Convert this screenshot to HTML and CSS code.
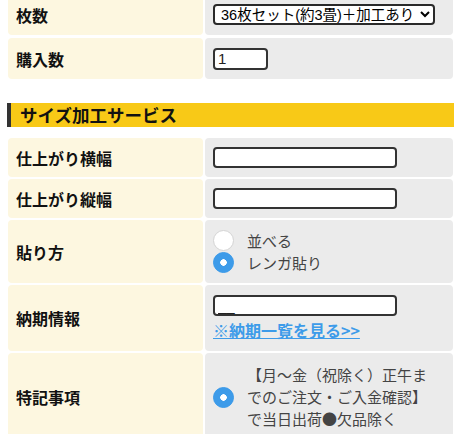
FILE: index.html
```html
<!DOCTYPE html>
<html lang="ja">
<head>
<meta charset="utf-8">
<link rel="stylesheet" href="styles.css">
</head>
<body>
<div class="form first">
  <div class="lbl r41">枚数</div>
  <div class="val r41">
    <select class="sel">
      <option>36枚セット(約3畳)＋加工あり</option>
    </select>
  </div>
  <div class="lbl r41">購入数</div>
  <div class="val r41"><input class="num" type="text" value="1"></div>
</div>

<h2 class="sec">サイズ加工サービス</h2>

<div class="form second">
  <div class="lbl r39">仕上がり横幅</div>
  <div class="val r39"><input class="txt" type="text"></div>
  <div class="lbl r39">仕上がり縦幅</div>
  <div class="val r39"><input class="txt" type="text"></div>
  <div class="lbl r63">貼り方</div>
  <div class="val r63">
    <div class="radios">
      <label class="opt"><input class="rad" type="radio" name="h"><span>並べる</span></label>
      <label class="opt"><input class="rad" type="radio" name="h" checked><span>レンガ貼り</span></label>
    </div>
  </div>
  <div class="lbl r66">納期情報</div>
  <div class="val r66 stack">
    <input class="txt" type="text" value="__">
    <a class="link" href="#">※納期一覧を見る&gt;&gt;</a>
  </div>
  <div class="lbl r88">特記事項</div>
  <div class="val r88">
    <label class="opt note"><input class="rad" type="radio" name="n" checked><span>【月～金（祝除く）正午までのご注文・ご入金確認】で当日出荷●欠品除く</span></label>
  </div>
</div>
</body>
</html>
```

FILE: styles.css
```css
html, body {
  margin: 0;
  padding: 0;
  background: #fff;
}
body {
  font-family: "Noto Sans CJK JP", "Liberation Sans", sans-serif;
  overflow: hidden;
}
.form {
  display: grid;
  grid-template-columns: 195px 248px;
  column-gap: 2px;
  row-gap: 3px;
  margin-left: 8px;
}
.form.first {
  margin-top: -6px;
}
.form.second {
  row-gap: 2px;
}
.lbl {
  background: #fdf7e0;
  border-radius: 4px;
  display: flex;
  align-items: center;
  padding-left: 8px;
  font-size: 16px;
  font-weight: bold;
  color: #111;
}
.val {
  background: #ebebeb;
  border-radius: 4px;
  display: flex;
  align-items: center;
  padding-left: 8px;
}
.r41 { height: 41px; }
.r39 { height: 39px; }
.r63 { height: 63px; }
.r66 { height: 66px; }
.r88 { height: 88px; }
.stack {
  flex-direction: column;
  align-items: flex-start;
  justify-content: flex-start;
  padding-top: 10px;
  box-sizing: border-box;
}
.sel {
  width: 222px;
  height: 21px;
  box-sizing: border-box;
  border: 2px solid #2a2a2a;
  border-radius: 4px;
  background: #fff;
  font-family: "Liberation Sans", "Noto Sans CJK JP", sans-serif;
  font-size: 14.5px;
  color: #000;
  padding: 0 0 0 2px;
}
.num, .txt {
  box-sizing: border-box;
  border: 2px solid #333;
  border-radius: 4px;
  background: #fff;
  font-family: "Liberation Sans", "Noto Sans CJK JP", sans-serif;
  font-size: 15px;
  color: #222;
  padding: 0 3px;
  margin: 0;
  outline: none;
}
.num {
  width: 55px;
  height: 22px;
}
.txt {
  width: 184px;
  height: 21px;
}
.sec {
  margin: 24px 0 11px 7px;
  height: 24px;
  width: 447px;
  box-sizing: border-box;
  background: #f8c917;
  border-left: 4px solid #333;
  font-size: 17.5px;
  font-weight: bold;
  line-height: 24px;
  padding-left: 9px;
  color: #111;
}
.radios {
  display: flex;
  flex-direction: column;
  gap: 1px;
}
.opt {
  display: flex;
  align-items: center;
  font-size: 15px;
  color: #444;
  line-height: 21px;
}
.rad {
  appearance: none;
  -webkit-appearance: none;
  width: 21px;
  height: 21px;
  margin: 0 13px 0 0;
  border-radius: 50%;
  background: #fff;
  border: 1px solid #d4d4d4;
  box-sizing: border-box;
  flex: none;
}
.rad:checked {
  background: #3d9be9;
  border-color: #3d9be9;
  background-image: radial-gradient(circle, #fff 0 3px, #3d9be9 3.5px);
}
.link {
  margin-top: 4px;
  font-size: 16px;
  font-weight: bold;
  color: #3d9be9;
  text-decoration: underline;
  line-height: 20px;
}
.note span {
  width: 190px;
  line-height: 22px;
}
```
